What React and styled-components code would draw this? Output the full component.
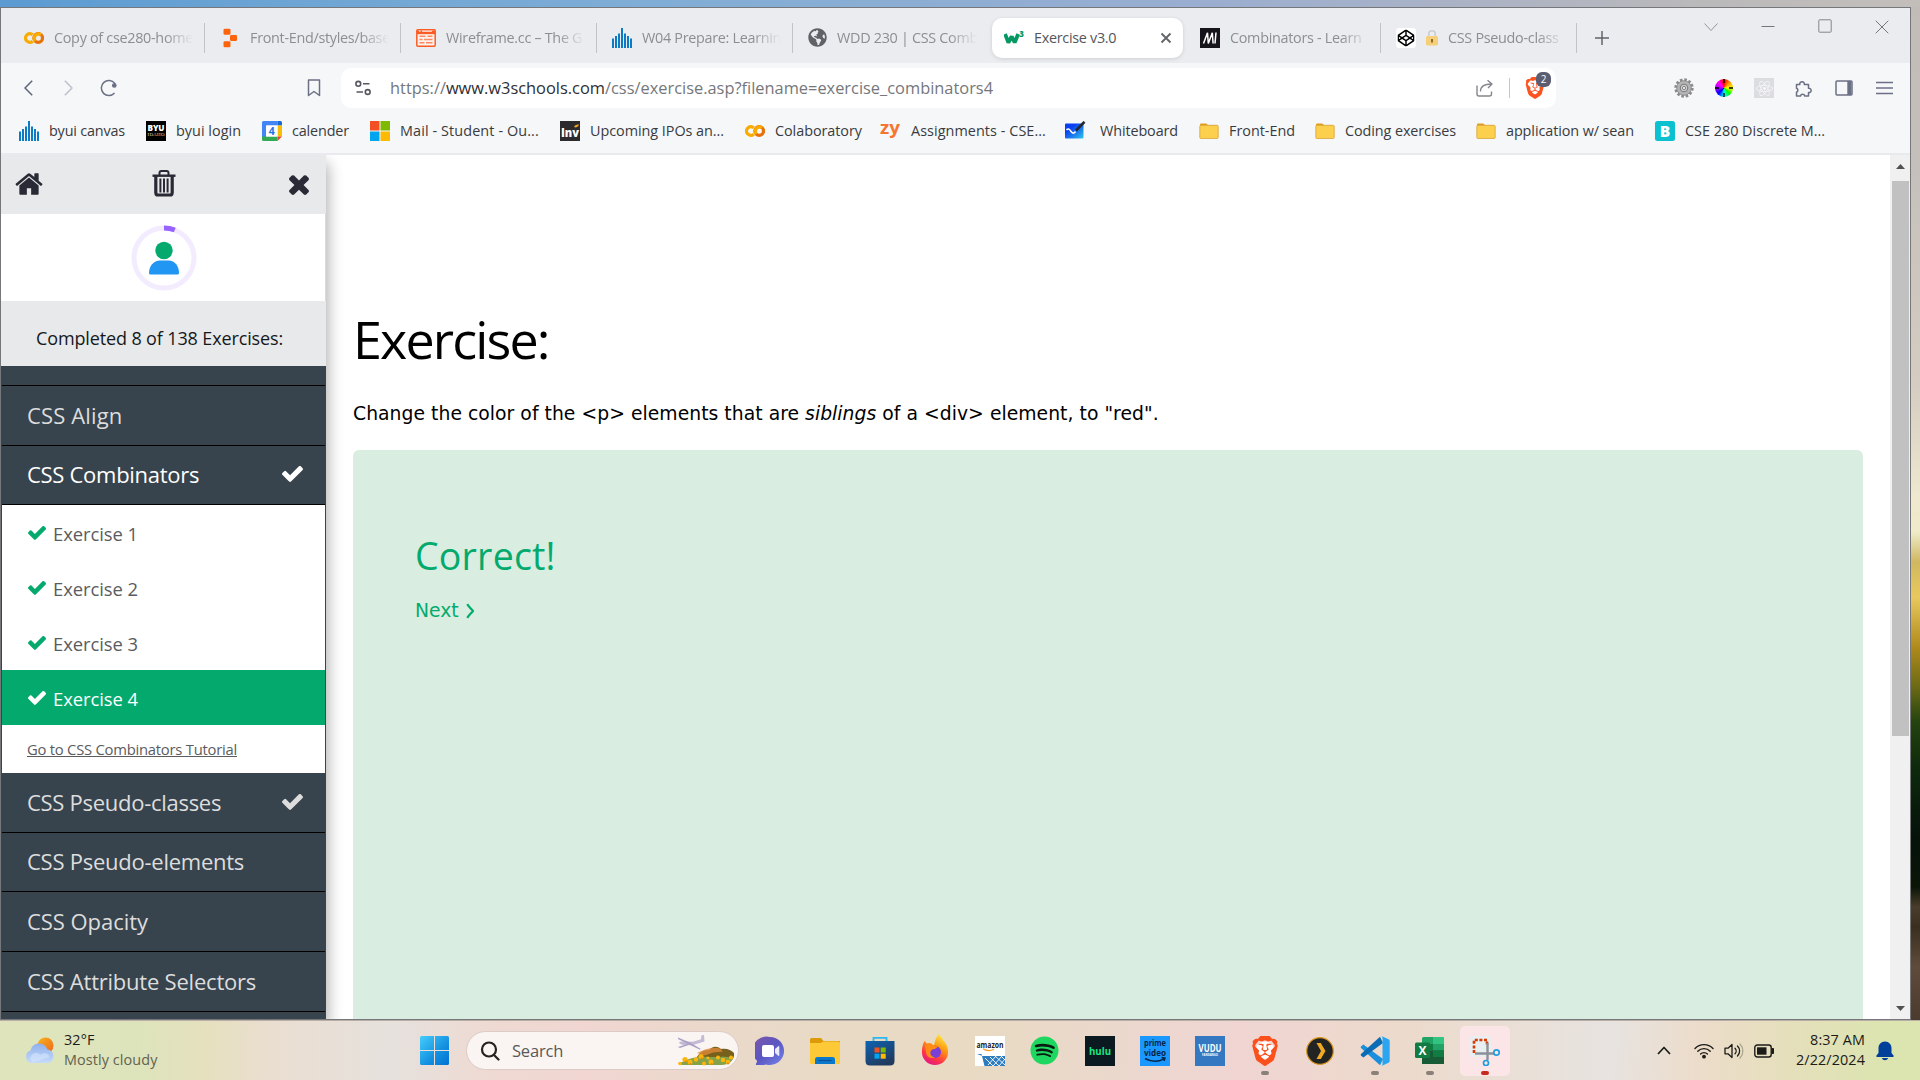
import React from 'react';
import styled, { createGlobalStyle, css } from 'styled-components';
import { SiBrave } from 'react-icons/si';
import { FaSpotify, FaGlobeAmericas, FaReact, FaCodepen } from 'react-icons/fa';

const ui = '"Open Sans", "Noto Sans", sans-serif';
const verdana = '"DejaVu Sans", Verdana, sans-serif';

const GlobalStyle = createGlobalStyle`
  * { box-sizing: border-box; }
  body { margin: 0; overflow: hidden; font-family: ${ui}; }
  svg { display: block; flex: none; }
`;

/* ---------- shell ---------- */

const Desktop = styled.div`
  width: 1920px;
  height: 1080px;
  display: grid;
  grid-template-columns: 1911px 9px;
  grid-template-rows: 7px 1013px 60px;
  overflow: hidden;
`;

const SkyStrip = styled.div`
  grid-column: 1 / 3;
  background: linear-gradient(90deg, #5b9bd2 0, #6ea5d4 300px, #7fadd6 640px, #9aaed0 1200px, #aab2c6 1450px, #bab9ba 1700px, #c3beba 1920px);
`;

const Window = styled.main`
  display: flex;
  flex-direction: column;
  border: 1px solid #75777b;
  background: #fff;
  overflow: hidden;
`;

const Meadow = styled.div`
  background: linear-gradient(180deg, #c2bcb8 0, #c4bfbb 150px, #d5cdc1 380px, #efe8cf 490px, #efebc9 525px, #d0b860 555px, #e8c95e 590px, #b08a1c 640px, #6b6a14 680px, #24430f 715px, #0e2a0c 760px, #05120a 830px, #0a1507 880px, #4b3d2c 900px, #3a2f1f 920px, #5f4b3b 960px, #4b3a2e 1013px);
`;

/* ---------- tabs ---------- */

const TabStrip = styled.div`
  height: 55px;
  flex: none;
  display: flex;
  align-items: center;
  background: #ebecf0;
  padding: 4px 0 0 8px;
`;

const TabSlot = styled.div`
  width: 196px;
  height: ${(p) => (p.$active ? 40 : 30)}px;
  display: flex;
  align-items: center;
  padding: 0 9px 0 15px;
  gap: 10px;
  border-right: 1px solid ${(p) => (p.$plain ? 'transparent' : '#c2c3c8')};
  ${(p) =>
    p.$active &&
    css`
      width: 191px;
      margin: 0 2px 0 3px;
      padding: 0 10px 0 12px;
      border: 0;
      border-radius: 10px;
      background: #fff;
      box-shadow: 0 1px 4px rgba(0, 0, 0, 0.12);
    `}
`;

const TabTitle = styled.span`
  flex: 1;
  min-width: 0;
  overflow: hidden;
  white-space: nowrap;
  font-size: 14.4px;
  line-height: 24px;
  letter-spacing: -0.3px;
  color: ${(p) => (p.$active ? '#55565a' : '#8d8e92')};
  ${(p) =>
    !p.$active &&
    css`
      mask-image: linear-gradient(90deg, #000 calc(100% - 30px), transparent calc(100% - 2px));
    `}
`;

const NewTab = styled.div`
  width: 50px;
  display: flex;
  justify-content: center;
`;

const WindowButtons = styled.div`
  margin-left: auto;
  height: 38px;
  padding-bottom: 22px;
  display: flex;
  align-items: center;
`;

const WindowButton = styled.div`
  width: 57px;
  display: flex;
  justify-content: center;
`;

/* ---------- toolbar ---------- */

const Toolbar = styled.div`
  height: 50px;
  flex: none;
  display: flex;
  align-items: center;
  background: #f5f7f9;
`;

const ToolButton = styled.div`
  width: 40px;
  display: flex;
  justify-content: center;
`;

const NavGroup = styled.div`
  width: 340px;
  display: flex;
  align-items: center;
  padding: 0 7px 0 7px;
  & > :last-child { margin-left: auto; }
`;

const AddressBar = styled.div`
  width: 1215px;
  height: 40px;
  display: flex;
  align-items: center;
  padding: 0 10px 0 14px;
  border-radius: 10px;
  background: #fff;
`;

const Url = styled.span`
  flex: 1;
  margin: -2px 0 0 19px;
  white-space: nowrap;
  font-size: 16.4px;
  color: #75777c;
  b { font-weight: 400; color: #2e2f33; }
`;

const Rule = styled.div`
  width: 1px;
  height: 20px;
  margin: 0 14px 0 15px;
  background: #c4c6ca;
`;

const Shield = styled.div`
  position: relative;
  color: #fb5420;
`;

const ShieldCount = styled.div`
  position: absolute;
  top: -5px;
  left: 12px;
  width: 15px;
  height: 15px;
  border-radius: 6px;
  background: #5b5e70;
  color: #fff;
  font-size: 10px;
  line-height: 15px;
  text-align: center;
`;

const Extensions = styled.div`
  margin-left: auto;
  display: flex;
  align-items: center;
  padding-right: 6px;
`;

const ColorWheel = styled.div`
  width: 18px;
  height: 18px;
  border-radius: 50%;
  background: conic-gradient(#f00, #ff9500, #ff0, #0f0, #0ff, #00f, #a0f, #f0f, #f00);
`;

const ReactBadge = styled.div`
  width: 20px;
  height: 20px;
  display: flex;
  align-items: center;
  justify-content: center;
  background: #dcdde0;
  color: #f7f7f8;
`;

/* ---------- bookmarks ---------- */

const Bookmarks = styled.div`
  height: 40px;
  flex: none;
  display: flex;
  align-items: flex-start;
  padding: 6px 0 0 18px;
  background: #f5f7f9;
`;

const Bookmark = styled.div`
  width: ${(p) => p.$w}px;
  height: 24px;
  flex: none;
  display: flex;
  align-items: center;
  gap: ${(p) => p.$gap || 10}px;
`;

const BookmarkLabel = styled.span`
  white-space: nowrap;
  font-size: 14.4px;
  line-height: 24px;
  letter-spacing: ${(p) => p.$ls || 0}px;
  color: #3a3b40;
`;

/* ---------- page ---------- */

const Page = styled.div`
  flex: 1;
  min-height: 0;
  display: flex;
  border-top: 2px solid #e9eaed;
  background: #fff;
`;

const Sidebar = styled.aside`
  width: 325px;
  flex: none;
  z-index: 1;
  display: flex;
  flex-direction: column;
  background: #38444d;
  box-shadow: 2px 8px 14px rgba(0, 0, 0, 0.32);
  clip-path: inset(0 -30px 0 0);
`;

const SideTop = styled.div`
  height: 59px;
  flex: none;
  display: flex;
  justify-content: space-between;
  padding: 14px 12px 0 13px;
  background: #e7e9eb;
`;

const Profile = styled.div`
  height: 87px;
  flex: none;
  display: flex;
  justify-content: center;
  align-items: center;
  padding-left: 1px;
  border-right: 1px solid #d9dadb;
  background: #fff;
`;

const Progress = styled.div`
  height: 65px;
  flex: none;
  padding: 24px 0 0 35px;
  font-size: 18px;
  line-height: 26px;
  letter-spacing: -0.13px;
  white-space: nowrap;
  color: #16181b;
  background: #e7e9eb;
`;

const Menu = styled.nav`
  flex: 1;
  min-height: 0;
  display: flex;
  flex-direction: column;
  padding: 0 1px;
  overflow: hidden;
  background: #38444d;
`;

const MenuItem = styled.div`
  height: ${(p) => p.$h}px;
  flex: none;
  display: flex;
  align-items: center;
  justify-content: space-between;
  padding: 0 22px 2px 25px;
  border-bottom: 1px solid #000;
  font-size: 22px;
  letter-spacing: ${(p) => p.$ls || 0}px;
  white-space: nowrap;
  color: ${(p) => (p.$open ? '#fff' : '#ddd')};
`;

const Exercise = styled.div`
  height: 55px;
  flex: none;
  display: flex;
  align-items: center;
  gap: 7px;
  padding: 1px 0 0 26px;
  font-size: 18.4px;
  letter-spacing: -0.05px;
  color: ${(p) => (p.$current ? '#fff' : '#5a5c5e')};
  background: ${(p) => (p.$current ? '#04aa6d' : '#fff')};
  svg { color: ${(p) => (p.$current ? '#fff' : '#04aa6d')}; }
`;

const TutorialRow = styled.div`
  height: 48px;
  flex: none;
  padding: 12px 0 0 25px;
  font-size: 14.8px;
  line-height: 24px;
  letter-spacing: -0.24px;
  white-space: nowrap;
  text-decoration: underline;
  color: #5a5c5e;
  background: #fff;
`;

const Content = styled.section`
  flex: 1;
  min-width: 0;
  display: flex;
  flex-direction: column;
  padding: 148px 27px 0 27px;
  overflow: hidden;
  color: #000;
`;

const Heading = styled.h1`
  margin: 0;
  height: 72px;
  font-size: 52px;
  line-height: 72px;
  font-weight: 400;
  letter-spacing: -1.85px;
`;

const Prompt = styled.p`
  margin: 25px 0 0;
  height: 50px;
  font-family: ${verdana};
  font-size: 18.75px;
  line-height: 28px;
  letter-spacing: 0.045px;
  white-space: nowrap;
`;

const Result = styled.div`
  flex: 1;
  padding: 78px 62px 0;
  border-radius: 6px 6px 0 0;
  color: #04aa6d;
  background: #d9eee1;
`;

const ResultTitle = styled.div`
  font-size: 37.5px;
  line-height: 56px;
  letter-spacing: 0.2px;
`;

const NextLink = styled.div`
  display: flex;
  align-items: center;
  gap: 7px;
  margin-top: 13px;
  font-family: ${verdana};
  font-size: 18.75px;
  line-height: 28px;
`;

const Scrollbar = styled.div`
  width: 20px;
  flex: none;
  display: flex;
  flex-direction: column;
  align-items: center;
  padding: 9px 0 8px;
  background: #f0f0f0;
`;

const Thumb = styled.div`
  width: 17px;
  height: 555px;
  margin: 12px 0 auto;
  background: #c1c1c1;
`;

/* ---------- taskbar ---------- */

const Taskbar = styled.footer`
  grid-column: 1 / 3;
  display: flex;
  align-items: center;
  border-top: 1px solid #b9aea6;
  background: linear-gradient(92deg, #dfe4bd 0, #dde4bb 140px, #e6e0bf 210px, #eaded0 270px, #e6e1dd 390px, #eedad2 490px, #f1d6d2 580px, #ead9ca 720px, #e8dac4 860px, #e8dac3 980px, #ebd8cd 1120px, #f0d5d3 1240px, #ecdacb 1400px, #e9e0d8 1530px, #e7e3e0 1610px, #ecdcca 1700px, #e6dfbd 1780px, #dce4b0 1880px);
`;

const Weather = styled.div`
  width: 415px;
  display: flex;
  align-items: center;
  gap: 9px;
  padding-left: 24px;
`;

const Stack = styled.div`
  display: flex;
  flex-direction: column;
  align-items: ${(p) => (p.$right ? 'flex-end' : 'flex-start')};
  margin-top: -2px;
  font-size: 14.4px;
  line-height: 20px;
  letter-spacing: 0.1px;
  white-space: nowrap;
  color: #1c1c18;
`;

const Dim = styled.span`
  color: #62624f;
`;

const StartButton = styled.div`
  width: 38px;
  display: flex;
  justify-content: center;
`;

const SearchBox = styled.div`
  width: 273px;
  height: 39px;
  display: flex;
  align-items: center;
  gap: 12px;
  margin: 0 3px 0 13px;
  padding: 0 3px 0 13px;
  border: 1px solid #dccbc6;
  border-radius: 20px;
  font-size: 16.5px;
  letter-spacing: -0.2px;
  color: #5b5957;
  background: #faf5f2;
  & > :last-child { margin-left: auto; }
`;

const AppButton = styled.div`
  position: relative;
  width: 55px;
  height: 50px;
  display: flex;
  align-items: center;
  justify-content: center;
`;

const AppTile = styled.div`
  width: 50px;
  height: 50px;
  display: flex;
  align-items: center;
  justify-content: center;
  border-radius: 5px;
  background: ${(p) => (p.$on ? '#fbe5e7' : 'transparent')};
`;

const Backed = styled.div`
  color: ${(p) => p.$fg};
  background: radial-gradient(${(p) => p.$back} ${(p) => p.$r}px, transparent ${(p) => p.$r + 1}px);
`;

const Running = styled.div`
  position: absolute;
  bottom: 1px;
  left: 24px;
  width: 8px;
  height: 4px;
  border-radius: 2px;
  background: ${(p) => (p.$alert ? '#c42b1c' : '#8b8078')};
`;

const Tray = styled.div`
  margin-left: auto;
  display: flex;
  align-items: center;
  padding-right: 26px;
`;

const TrayIcon = styled.div`
  margin-right: ${(p) => p.$after}px;
`;

/* ---------- icons ---------- */

const CHECK = 'M1671 566q0 40-28 68l-724 724-136 136q-28 28-68 28t-68-28l-136-136-362-362q-28-28-28-68t28-68l136-136q28-28 68-28t68 28l294 295 656-657q28-28 68-28t68 28l136 136q28 28 28 68z';
const TIMES = 'M1490 1322q0 40-28 68l-136 136q-28 28-68 28t-68-28l-294-294-294 294q-28 28-68 28t-68-28l-136-136q-28-28-28-68t28-68l294-294-294-294q-28-28-28-68t28-68l136-136q28-28 68-28t68 28l294 294 294-294q28-28 68-28t68 28l136 136q28 28 28 68t-28 68l-294 294 294 294q28 28 28 68z';
const HOME = 'M1472 992v480q0 26-19 45t-45 19h-384v-384h-256v384h-384q-26 0-45-19t-19-45v-480q0-1 .5-3t.5-3l575-474 575 474q1 2 1 6zm223-69l-62 74q-8 9-21 11h-3q-13 0-21-7l-692-577-692 577q-12 8-24 7-13-2-21-11l-62-74q-8-10-7-23.5t11-21.5l719-599q32-26 76-26t76 26l244 204v-195q0-14 9-23t23-9h192q14 0 23 9t9 23v408l219 182q10 8 11 21.5t-7 23.5z';

const Check = ({ w, h }) => (
  <svg width={w} height={h} viewBox="121 339 1550 1188" preserveAspectRatio="none">
    <path d={CHECK} fill="currentColor" />
  </svg>
);
const HomeIcon = () => (
  <svg width="30" height="30" viewBox="0 0 1792 1792"><path d={HOME} fill="#282a35" /></svg>
);
const CloseIcon = () => (
  <svg width="30" height="30" viewBox="0 0 1792 1792"><path d={TIMES} fill="#282a35" /></svg>
);
const TrashIcon = () => (
  <svg width="24" height="28" viewBox="0 0 24 28" fill="none" stroke="#282a35">
    <path d="M.5 6.700h23" strokeWidth="2.400" />
    <path d="M7.500 6V4c0-1.100.8-1.900 1.900-1.900h5.200c1.100 0 1.900.8 1.900 1.900v2" strokeWidth="2" />
    <path d="M3.800 7v16.400c0 1.700.8 2.600 2.200 2.600h12c1.400 0 2.200-.9 2.200-2.600V7" strokeWidth="3.200" />
    <path d="M8.400 9.500v14M12 9.500v14M15.600 9.500v14" strokeWidth="2" />
  </svg>
);
const Avatar = () => (
  <svg width="66" height="66" viewBox="0 0 66 66">
    <circle cx="33" cy="33" r="30" fill="none" stroke="#f3ecff" strokeWidth="5" />
    <path d="M33 3a30 30 0 0 1 10.800 2" fill="none" stroke="#9763ff" strokeWidth="5" />
    <circle cx="33" cy="25.500" r="8.700" fill="#04aa6d" />
    <path d="M18 48c0-7 4.500-12.600 11-12.600h8.500C44 35.400 48 41 48 48q0 1.500-1.500 1.500h-27Q18 49.500 18 48z" fill="#2196f3" />
  </svg>
);

const Colab = () => (
  <svg width="20" height="20" viewBox="0 0 20 20" fill="none" strokeWidth="3.200">
    <circle cx="14.200" cy="10" r="4.300" stroke="#e8710a" />
    <path d="M8.700 13.200A4.300 4.300 0 1 1 8.700 6.800" stroke="#f9ab00" />
    <path d="M11.200 13a4.300 4.300 0 0 1 5.800-6.200" stroke="#f9ab00" />
  </svg>
);
const Replit = () => (
  <svg width="20" height="20" viewBox="0 0 20 20" fill="#fb640c">
    <rect x="3.500" y=".800" width="7" height="6" rx="1.300" />
    <rect x="10" y="7" width="7" height="6" rx="1.300" />
    <rect x="3.500" y="13.200" width="7" height="6" rx="1.300" />
  </svg>
);
const Wireframe = () => (
  <svg width="20" height="20" viewBox="0 0 20 20">
    <rect x=".8" y="1.800" width="18.400" height="16.400" rx="1" fill="#fff2ec" stroke="#fa5b25" strokeWidth="1.500" />
    <path d="M1 4.400h18" stroke="#fa5b25" strokeWidth="3.500" />
    <path d="M3 3.200h1.500M6 3.200h10" stroke="#fff" />
    <path d="M3.500 8.300h6M11.500 8.300h5M3.500 11.500h3M8 11.500h8.500M3.500 14.700h5M10 14.700h6.500" stroke="#fb8a63" strokeWidth="1.600" />
  </svg>
);
const Spires = () => (
  <svg width="20" height="20" viewBox="0 0 20 20" stroke="#0d7ac4" strokeWidth="2">
    <path d="M1 20v-9.500M4 20V8M7 20V5.500M10 20V0M13 20V5.500M16 20V8M19 20v-9.500" />
  </svg>
);
const W3 = () => (
  <svg width="20" height="20" viewBox="0 0 20 20">
    <path d="M1 6l3.400 8.500L7.700 8.500l3 6L14.200 6" fill="none" stroke="#059862" strokeWidth="3.800" strokeLinejoin="bevel" />
    <text x="15.200" y="8.500" fontSize="7.800" fontWeight="800" fontFamily="Open Sans" fill="#059862">3</text>
  </svg>
);
const Mdn = () => (
  <svg width="20" height="20" viewBox="0 0 20 20">
    <rect width="20" height="20" fill="#15141a" />
    <path d="M3.500 15.500L7.500 4.800l.8 10.700L12.300 4.800l.8 10.700M16 4.500l-1 11" fill="none" stroke="#fff" strokeWidth="1.500" />
  </svg>
);
const Codepen = () => (
  <svg width="20" height="20" viewBox="0 0 20 20">
    <rect width="20" height="20" rx="3" fill="#fff" />
    <g transform="translate(1.500 1.500)"><FaCodepen size={17} color="#000" /></g>
  </svg>
);
const Lock = () => (
  <svg width="12" height="16" viewBox="0 0 12 16">
    <path d="M2.800 7V4a3.200 3.200 0 0 1 6.400 0v3" fill="none" stroke="#c9ced3" strokeWidth="1.600" />
    <rect y="6" width="12" height="9.500" rx="1.500" fill="#f6cf78" />
    <path d="M6 9v3.500" stroke="#8a6a30" strokeWidth="2" />
  </svg>
);
const Byu = () => (
  <svg width="20" height="20" viewBox="0 0 20 20">
    <rect width="20" height="20" fill="#000" />
    <text x="10" y="9.500" fontSize="8.200" fontWeight="800" textAnchor="middle" fontFamily="Open Sans" fill="#fff" textLength="17">BYU</text>
    <text x="10" y="15.300" fontSize="5" textAnchor="middle" fontFamily="Liberation Serif" fill="#ddd" textLength="17">IDAHO</text>
  </svg>
);
const Calendar = () => (
  <svg width="20" height="20" viewBox="0 0 20 20">
    <path d="M1.500 0h14v4.500H4.500V16H0V1.500Q0 0 1.500 0z" fill="#4285f4" />
    <path d="M15.500 0h3Q20 0 20 1.500V4.500h-4.500z" fill="#1967d2" />
    <path d="M15.500 4.500H20v11h-4.500z" fill="#fbbc04" />
    <path d="M0 15.500h15.500V20h-14Q0 20 0 18.500z" fill="#34a853" />
    <path d="M15.500 15.500H20L15.500 20z" fill="#ea4335" />
    <rect x="4" y="4.500" width="11.500" height="11" fill="#fff" />
    <text x="9.800" y="13.700" fontSize="10.500" fontWeight="700" textAnchor="middle" fontFamily="Open Sans" fill="#1a73e8">4</text>
  </svg>
);
const Microsoft = () => (
  <svg width="20" height="20" viewBox="0 0 20 20">
    <path d="M0 0h9.500v9.500H0z" fill="#f25022" /><path d="M10.500 0H20v9.500h-9.500z" fill="#7fba00" />
    <path d="M0 10.500h9.500V20H0z" fill="#00a4ef" /><path d="M10.500 10.500H20V20h-9.500z" fill="#ffb900" />
  </svg>
);
const Inv = () => (
  <svg width="20" height="20" viewBox="0 0 20 20">
    <rect width="20" height="20" fill="#2b2b2d" />
    <text x="10" y="15.500" fontSize="11.500" fontWeight="800" textAnchor="middle" fontFamily="Open Sans" fill="#fff" textLength="18" lengthAdjust="spacingAndGlyphs">Inv</text>
    <path d="M14 5.500q2-2.500 5-2-1 3-4 3z" fill="#f6a21b" />
  </svg>
);
const Zy = () => (
  <svg width="20" height="20" viewBox="0 0 20 20">
    <text x="10" y="12.500" fontSize="18" fontWeight="700" textAnchor="middle" fontFamily="Open Sans" fill="#f5762f" textLength="20" lengthAdjust="spacingAndGlyphs">zy</text>
  </svg>
);
const Whiteboard = () => (
  <svg width="22" height="20" viewBox="0 0 22 20">
    <defs><linearGradient id="wb" x1="0" y1="0" x2="1" y2="1"><stop offset=".3" stopColor="#0a3ff0" /><stop offset="1" stopColor="#2fc6ea" /></linearGradient></defs>
    <rect y="2.500" width="18.500" height="15" rx="1" fill="url(#wb)" />
    <path d="M1.500 9c2-2.500 3.500 0 5 2s3 1 4-.5" fill="none" stroke="#fff" strokeWidth="1.500" />
    <path d="M11 9.500L19.500.8" stroke="#23282f" strokeWidth="2.600" />
  </svg>
);
const Folder = () => (
  <svg width="20" height="20" viewBox="0 0 20 20">
    <path d="M1 3.600q0-1.200 1.200-1.200h5L9.500 4.400H18V8H1z" fill="#dd9d1c" />
    <rect x=".8" y="4.300" width="18.400" height="13.200" rx="1" fill="#fccf4d" stroke="#d9a53a" strokeWidth=".8" />
  </svg>
);
const BIcon = () => (
  <svg width="20" height="20" viewBox="0 0 20 20">
    <rect width="20" height="20" rx="2.500" fill="#0cc1cf" />
    <text x="10" y="15.600" fontSize="15.500" fontWeight="800" textAnchor="middle" fontFamily="Open Sans" fill="#fff">B</text>
  </svg>
);

const Line = ({ w = 20, h = 20, d, c = '#6b7084', sw = 1.5, children, cap = 'butt' }) => (
  <svg width={w} height={h} viewBox={`0 0 ${w} ${h}`} fill="none" stroke={c} strokeWidth={sw} strokeLinecap={cap} strokeLinejoin="round">
    {d && <path d={d} />}
    {children}
  </svg>
);

const Gear = () => (
  <svg width="20" height="20" viewBox="0 0 20 20">
    <circle cx="10" cy="10" r="8.300" fill="none" stroke="#8b8b8b" strokeWidth="2.800" strokeDasharray="2.600 1.745" />
    <circle cx="10" cy="10" r="7.300" fill="#b4b4b4" stroke="#808080" strokeWidth=".8" />
    <circle cx="10" cy="10" r="3.800" fill="#d2d2d2" stroke="#777" />
    <circle cx="10" cy="10" r="1.600" fill="#f5f5f5" stroke="#666" strokeWidth=".8" />
  </svg>
);
const Wheel = () => (
  <svg width="18" height="18" viewBox="0 0 18 18" stroke="#000" strokeWidth="1.400"><path d="M9 0v4M9 14v4M0 9h4M14 9h4" /></svg>
);

const WeatherIcon = () => (
  <svg width="31" height="27" viewBox="0 0 31 27">
    <defs>
      <linearGradient id="cl" x1="0" y1="0" x2="0" y2="1"><stop offset="0" stopColor="#8fb0ec" /><stop offset="1" stopColor="#c5dbfa" /></linearGradient>
      <linearGradient id="sn" x1="0" y1="0" x2="1" y2="1"><stop offset="0" stopColor="#f7b51f" /><stop offset="1" stopColor="#f0641b" /></linearGradient>
    </defs>
    <circle cx="21.500" cy="8.500" r="8" fill="url(#sn)" />
    <path d="M7 26a6.500 6.500 0 0 1-.5-12.500C7.500 9 11 6.500 15 6.500s7 2.300 8.200 5.700A7 7 0 0 1 24 26z" fill="url(#cl)" />
    <path d="M9 25.500a5 5 0 0 1 .5-9c3-2 6 0 7 1.500 3-3 8-2 9 2" fill="#d6e6fc" opacity=".6" />
  </svg>
);
const StartIcon = () => (
  <svg width="29" height="29" viewBox="0 0 29 29">
    <defs><linearGradient id="st" gradientUnits="userSpaceOnUse" x1="0" y1="0" x2="29" y2="29"><stop offset="0" stopColor="#45cdfb" /><stop offset=".6" stopColor="#1390e0" /><stop offset="1" stopColor="#0072d2" /></linearGradient></defs>
    <path d="M1.500 0H14v14H0V1.500Q0 0 1.500 0zM15 0h12.500Q29 0 29 1.500V14H15zM0 15h14v14H1.500Q0 29 0 27.500zM15 15h14v12.500q0 1.500-1.500 1.500H15z" fill="url(#st)" />
  </svg>
);
const SearchArt = () => (
  <svg width="58" height="32" viewBox="0 0 58 32">
    <path d="M18 26c3-8 8-11 14-11 4-4 8-4 12-1 6-1 10 1 13 4q1 5-4 9z" fill="#76601c" />
    <path d="M20 18c7-4 16-6 23-4.500l3 3-10 1-8 3z" fill="#e0883a" opacity=".8" />
    <path d="M2 29c8-6 20-8 30-7 9 0 17-1 24 1-1 4-6 7-11 7H8q-5 0-6-1z" fill="#84a24a" />
    <g fill="#fdb40c">
      <circle cx="3" cy="28.500" r="1.800" /><circle cx="8" cy="24.500" r="2.600" /><circle cx="13" cy="27" r="2.500" /><circle cx="19" cy="24.500" r="2.200" />
      <circle cx="24" cy="21.500" r="2.600" /><circle cx="27" cy="28.500" r="2" /><circle cx="34" cy="27" r="2.500" /><circle cx="41" cy="22.500" r="2" />
      <circle cx="46" cy="25" r="2.200" /><circle cx="51" cy="27" r="2.300" /><circle cx="54" cy="22.500" r="2" /><circle cx="31" cy="23" r="1.600" />
    </g>
    <g fill="#e8860a">
      <circle cx="8.500" cy="26.500" r="1" /><circle cx="13.500" cy="29" r="1" /><circle cx="24.500" cy="23.500" r="1.100" /><circle cx="34.500" cy="29" r="1" /><circle cx="51" cy="28.500" r="1" />
    </g>
    <path d="M2 7.500q1-1.500 4-1l10 .3 8-2.500.5-4 2.500-.3.500 6.500L15 10.200l-8-.2q-4-.5-5-2.500z" fill="#c3bbd6" />
    <path d="M1 2.500l12 5 11 6.500-1.500.5L12 9.500 1 4zM1 12l9-3 3 .5-10 3.500z" fill="#aaa1c4" />
  </svg>
);
const ChatIcon = () => (
  <svg width="30" height="30" viewBox="0 0 30 30">
    <defs><linearGradient id="ch" x1="0" y1="0" x2="1" y2="1"><stop offset="0" stopColor="#7d58a8" /><stop offset=".5" stopColor="#5b55c2" /><stop offset="1" stopColor="#7486e8" /></linearGradient></defs>
    <path d="M15 1a14 14 0 1 1-4 27.400q-1 .4-2 .6H1.200q-.8-.5 0-1.500l1-2.500A14 14 0 0 1 15 1z" fill="url(#ch)" />
    <rect x="7" y="9" width="12" height="12" rx="2" fill="#fff" />
    <path d="M20 13l3.500-3q.8 0 .8.800v8.400q0 .8-.8.800L20 17z" fill="#eceaff" />
  </svg>
);
const Explorer = () => (
  <svg width="30" height="28" viewBox="0 0 30 28">
    <path d="M0 2.500Q0 1 1.500 1H11l2.500 3H30v6H0z" fill="#dc9a09" />
    <path d="M0 6h11l2-1.500h15.500Q30 4.500 30 6v19.500q0 1.500-1.500 1.500h-27Q0 27 0 25.500z" fill="#fdc937" />
    <path d="M5 27v-4.500Q5 20 7.500 20h15q2.500 0 2.500 2.500V27z" fill="#0b79cb" />
    <path d="M8.500 23.500h13" stroke="#0a4f94" strokeWidth="1.200" />
  </svg>
);
const Store = () => (
  <svg width="30" height="30" viewBox="0 0 30 30">
    <defs><linearGradient id="so" x1="0" y1="0" x2=".6" y2="1"><stop offset="0" stopColor="#0e63b3" /><stop offset="1" stopColor="#213a5e" /></linearGradient></defs>
    <path d="M8.500 6V1.800h13V6" fill="none" stroke="#29b8ef" strokeWidth="1.800" />
    <path d="M.5 5h29v20q0 4.500-4.500 4.500H5Q.5 29.500.5 25z" fill="url(#so)" />
    <path d="M9.500 11.500h5v5h-5z" fill="#f25022" /><path d="M15.700 11.500h5v5h-5z" fill="#7fba00" />
    <path d="M9.500 17.700h5v5h-5z" fill="#00a4ef" /><path d="M15.700 17.700h5v5h-5z" fill="#ffb900" />
  </svg>
);
const Firefox = () => (
  <svg width="28" height="34" viewBox="0 0 30 36">
    <defs><linearGradient id="ff" x1=".8" y1="0" x2=".3" y2="1"><stop offset="0" stopColor="#fff04a" /><stop offset=".4" stopColor="#ff980e" /><stop offset=".75" stopColor="#ff3647" /><stop offset="1" stopColor="#e31587" /></linearGradient></defs>
    <path d="M19 0c3 3 4 5 5 7 3 2 5 7 5 12a14 14 0 0 1-28 0c0-5 1-9 3-12l2 3q3-1 5 0l3 2c1-5 2-9 5-12z" fill="url(#ff)" />
    <circle cx="15" cy="19" r="6.500" fill="#7a3fd6" />
    <path d="M4 12q4-3 9 0 3 1 5 1-1 3-5 3-3 1-3 4 0 4 5 5-6 2-9-3z" fill="#ff8a16" />
  </svg>
);
const Amazon = () => (
  <svg width="30" height="30" viewBox="0 0 30 30">
    <rect width="30" height="30" fill="#fff" />
    <text x="15" y="11.500" fontSize="8.400" fontWeight="700" textAnchor="middle" fontFamily="Open Sans" fill="#222" textLength="27" lengthAdjust="spacingAndGlyphs">amazon</text>
    <path d="M8 12.800q5 3.500 11 .5" fill="none" stroke="#f79a1c" strokeWidth="1.200" />
    <path d="M2 18h4.500l3 12H30V20H7.500z" fill="#2e7cc0" />
    <path d="M10 22l8 8M15 21l9 9M20 20l10 9M26 20l4 4M13 29l8-9M18 30l9-10M24 30l6-7" stroke="#fff" strokeWidth=".9" />
  </svg>
);
const TextTile = ({ bg, fg, lines, smile }) => (
  <svg width="30" height="30" viewBox="0 0 30 30">
    <rect width="30" height="30" fill={bg} />
    {lines.map(([t, y, s, l]) => (
      <text key={t} x="15" y={y} fontSize={s} fontWeight="700" textAnchor="middle" fontFamily="Open Sans" fill={fg} textLength={l} lengthAdjust="spacingAndGlyphs">{t}</text>
    ))}
    {smile && <path d="M5 22.500q10 5.500 19 .3M21.500 21.500l3.500.5-1 3" fill="none" stroke={fg} strokeWidth="1.500" />}
  </svg>
);
const Plex = () => (
  <svg width="28" height="28" viewBox="0 0 28 28">
    <circle cx="14" cy="14" r="13.300" fill="#222323" stroke="#d9951a" strokeWidth="1.200" />
    <path d="M10.500 6h4.300l4.700 8-4.700 8h-4.300l4.500-8z" fill="#efa924" />
  </svg>
);
const VsCode = () => (
  <svg width="30" height="30" viewBox="0 0 30 30">
    <path d="M3.300 8.600L1 10.400q-.7.700 0 1.500L20 29.200l3-6.200z" fill="#1a8fdd" />
    <path d="M3.300 21.400L1 19.600q-.7-.7 0-1.500L20 .8 23 7z" fill="#0b6cb5" />
    <path d="M21.500 0l7 3.200q1.200.6 1.200 1.800v20q0 1.200-1.200 1.800l-7 3.200q1-.8 1-2V2q0-1.200-1-2z" fill="#2aa5f2" />
  </svg>
);
const Excel = () => (
  <svg width="30" height="29" viewBox="0 0 30 29">
    <rect x="7" y="1" width="22" height="27" rx="1.500" fill="#21a366" />
    <path d="M18 1h9.500Q29 1 29 2.500V8H18z" fill="#33c481" />
    <path d="M7 8h11v6.500H7z" fill="#107c41" /><path d="M7 14.500h22v13q0 .5-1.500.5H7z" fill="#185c37" /><path d="M18 14.500h11V21H18z" fill="#107c41" />
    <rect y="6.500" width="15" height="15.500" rx="1.500" fill="#107c41" />
    <text x="7.500" y="18.500" fontSize="12" fontWeight="700" textAnchor="middle" fontFamily="Open Sans" fill="#fff">X</text>
  </svg>
);
const Snip = () => (
  <svg width="30" height="30" viewBox="0 0 30 30">
    <rect x="0" y="0" width="21" height="21" rx="2" fill="#e9eef1" />
    <path d="M4 17V4h13v6" fill="none" stroke="#d83b01" strokeWidth="2.600" strokeDasharray="3 1.600" />
    <path d="M17.500 7v17M5 17.500h19" stroke="#8b9199" strokeWidth="2.400" />
    <circle cx="26.500" cy="16.500" r="2.700" fill="none" stroke="#1f9de0" strokeWidth="1.700" />
    <circle cx="16" cy="27" r="2.500" fill="none" stroke="#1f9de0" strokeWidth="1.700" />
  </svg>
);
const Bell = () => (
  <svg width="18" height="20" viewBox="0 0 18 20" fill="#00409a">
    <path d="M9 .5c4 0 6.500 3 6.500 6.500v5l2.200 2.700q.3 1.300-1 1.300H1.300q-1.300 0-1-1.300L2.500 12V7C2.500 3.500 5 .5 9 .5zM5.800 17h6.400q-.8 2.300-3.200 2.300T5.800 17z" />
  </svg>
);
const Wifi = () => (
  <svg width="20" height="16" viewBox="0 0 20 16" fill="none" stroke="#1b1b18" strokeWidth="1.400" strokeLinecap="round">
    <path d="M1 5.500a12.500 12.500 0 0 1 18 0M3.800 8.300a8.600 8.600 0 0 1 12.400 0M6.600 11a4.800 4.800 0 0 1 6.800 0" />
    <circle cx="10" cy="13.700" r="1.200" fill="#1b1b18" />
  </svg>
);
const Sound = () => (
  <svg width="20" height="18" viewBox="0 0 20 18" fill="none" stroke="#1b1b18" strokeWidth="1.300" strokeLinejoin="round" strokeLinecap="round">
    <path d="M1 6.200h3L8 2.500v13L4 11.800H1z" />
    <path d="M11 6.200a4 4 0 0 1 0 5.600M13.500 4a7 7 0 0 1 0 10" /><path d="M16 2a10 10 0 0 1 0 14" stroke="#a9a88e" />
  </svg>
);
const Battery = () => (
  <svg width="21" height="14" viewBox="0 0 21 14">
    <rect x=".8" y="1" width="16.400" height="12" rx="2.500" fill="none" stroke="#1b1b18" strokeWidth="1.400" />
    <rect x="3" y="3.300" width="9.500" height="7.400" fill="#1b1b18" /><path d="M18 4.500h1.500V9.500H18z" fill="#1b1b18" stroke="#1b1b18" />
  </svg>
);

/* ---------- data ---------- */

const bookmarks = [
  [Spires, 'byui canvas', 127, -0.18],
  [Byu, 'byui login', 116, 0.02],
  [Calendar, 'calender', 108, -0.15],
  [Microsoft, 'Mail - Student - Ou...', 190, 0.11],
  [Inv, 'Upcoming IPOs an...', 185, -0.04],
  [Colab, 'Colaboratory', 135, -0.05],
  [Zy, 'Assignments - CSE...', 185, 0.06, 11],
  [Whiteboard, 'Whiteboard', 134, -0.11, 13],
  [Folder, 'Front-End', 116, -0.02],
  [Folder, 'Coding exercises', 161, -0.09],
  [Folder, 'application w/ sean', 179, -0.09],
  [BIcon, 'CSE 280 Discrete M...', 180, 0],
];

const apps = [
  [<ChatIcon />], [<Explorer />], [<Store />], [<Firefox />], [<Amazon />],
  [<Backed $fg="#1ed760" $back="#0b1a10" $r={12}><FaSpotify size={29} /></Backed>],
  [<TextTile bg="#0a1a20" fg="#1ce783" lines={[['hulu', 18.5, 10.5, 22]]} />],
  [<TextTile bg="#1a98ff" fg="#06264a" lines={[['prime', 10.2, 9, 22], ['video', 19.5, 9, 22]]} smile />],
  [<TextTile bg="#3478c1" fg="#fff" lines={[['VUDU', 16, 10, 23], ['FANDANGO', 20, 2.8, 16]]} />],
  [<Backed $fg="#fb4f1c" $back="#fff" $r={9}><SiBrave size={30} /></Backed>, 1],
  [<Plex />], [<VsCode />, 1], [<Excel />, 1], [<Snip />, 2],
];

export default function App() {
  return (
    <Desktop>
      <GlobalStyle />
      <SkyStrip />
      <Window>
        <TabStrip>
          <TabSlot><Colab /><TabTitle>Copy of cse280-home</TabTitle></TabSlot>
          <TabSlot><Replit /><TabTitle>Front-End/styles/base</TabTitle></TabSlot>
          <TabSlot><Wireframe /><TabTitle>Wireframe.cc – The G</TabTitle></TabSlot>
          <TabSlot><Spires /><TabTitle>W04 Prepare: Learnin</TabTitle></TabSlot>
          <TabSlot $plain><FaGlobeAmericas size={19} color="#5f6368" /><TabTitle>WDD 230 | CSS Comb</TabTitle></TabSlot>
          <TabSlot $active>
            <W3 /><TabTitle $active>Exercise v3.0</TabTitle>
            <Line w={14} h={14} d="M2.500 2.500l9 9M11.500 2.500l-9 9" c="#606368" sw={1.8} />
          </TabSlot>
          <TabSlot><Mdn /><TabTitle>Combinators - Learn</TabTitle></TabSlot>
          <TabSlot><Codepen /><Lock /><TabTitle>CSS Pseudo-class</TabTitle></TabSlot>
          <NewTab><Line w={16} h={16} d="M8 1v14M1 8h14" c="#606368" sw={1.5} /></NewTab>
          <WindowButtons>
            <WindowButton><Line w={14} h={10} d="M.5 1.500L7 8.500l6.500-7" c="#95969a" sw={1} /></WindowButton>
            <WindowButton><Line w={14} h={5} d="M.5 2.500h13" c="#75767a" sw={1} /></WindowButton>
            <WindowButton><Line w={14} h={15} d="M1.500.8h11q.7 0 .7.700v11q0 .700-.7.700h-11q-.7 0-.7-.700v-11q0-.7.700-.7z" c="#85868a" sw={1} /></WindowButton>
            <WindowButton><Line w={14} h={14} d="M.7.700l12.600 12.600M13.300.7L.700 13.300" c="#75767a" sw={1} /></WindowButton>
          </WindowButtons>
        </TabStrip>
        <Toolbar>
          <NavGroup>
            <ToolButton><Line w={9} h={16} d="M8.200.8L1 8l7.200 7.200" c="#5f6478" /></ToolButton>
            <ToolButton><Line w={9} h={16} d="M.8.8L8 8 .8 15.200" c="#bdc0ca" /></ToolButton>
            <ToolButton><Line w={18} h={18} c="#6b7084"><path d="M15.500 14a7.500 7.500 0 1 1 .3-9.500l.7 2.500" /><circle cx="15.300" cy="6.500" r="1.600" fill="#6b7084" /></Line></ToolButton>
            <ToolButton><Line w={14} h={18} d="M1.500 1h11v15.500L7 12.500l-5.500 4z" /></ToolButton>
          </NavGroup>
          <AddressBar>
            <Line w={16} h={16} c="#55585e" sw={1.6}>
              <circle cx="3.300" cy="3.800" r="2.400" /><circle cx="12.700" cy="12" r="2.400" /><path d="M8 3.800h6.500M1.500 12H8" />
            </Line>
            <Url>https://<b>www.w3schools.com</b>/css/exercise.asp?filename=exercise_combinators4</Url>
            <Line w={18} h={18} c="#85878d" sw={1.4}>
              <path d="M1 6.500v8.500q0 2 2 2h10.500q2 0 2-2v-2.500M4.500 12.500c0-5 3.500-7.500 11-7.500M11.500 1.200L16 5l-4 4" />
            </Line>
            <Rule />
            <Shield><SiBrave size={22} /><ShieldCount>2</ShieldCount></Shield>
          </AddressBar>
          <Extensions>
            <ToolButton><Gear /></ToolButton>
            <ToolButton><ColorWheel><Wheel /></ColorWheel></ToolButton>
            <ToolButton><ReactBadge><FaReact size={17} /></ReactBadge></ToolButton>
            <ToolButton><Line w={18} h={18} d="M1.500 5.500h3.300a2.300 2.300 0 1 1 4.500 0h4.200v3.800a2.200 2.200 0 1 1 0 4.300v3.400H9.800a2.200 2.200 0 0 0-4.300 0h-4v-3.700a2.200 2.200 0 0 0 0-4.100z" /></ToolButton>
            <ToolButton><Line w={18} h={16} c="#6b7084"><rect x="1" y="1" width="16" height="14" rx="1" /><path d="M14.300 1v14" strokeWidth="4" /></Line></ToolButton>
            <ToolButton><Line w={17} h={14} d="M0 1.500h17M0 7h17M0 12.500h17" sw={1.4} /></ToolButton>
          </Extensions>
        </Toolbar>
        <Bookmarks>
          {bookmarks.map(([Icon, label, w, ls, gap]) => (
            <Bookmark key={label} $w={w} $gap={gap}>
              <Icon /><BookmarkLabel $ls={ls}>{label}</BookmarkLabel>
            </Bookmark>
          ))}
        </Bookmarks>
        <Page>
          <Sidebar>
            <SideTop><HomeIcon /><TrashIcon /><CloseIcon /></SideTop>
            <Profile><Avatar /></Profile>
            <Progress>Completed 8 of 138 Exercises:</Progress>
            <Menu>
              <MenuItem $h={20} />
              <MenuItem $h={60} $ls={0.15}>CSS Align</MenuItem>
              <MenuItem $h={59} $ls={-0.29} $open>CSS Combinators<Check w={21} h={16} /></MenuItem>
              {[1, 2, 3, 4].map((n) => (
                <Exercise key={n} $current={n === 4}><Check w={18} h={14} /><span>Exercise {n}</span></Exercise>
              ))}
              <TutorialRow>Go to CSS Combinators Tutorial</TutorialRow>
              <MenuItem $h={60} $ls={-0.28}>CSS Pseudo-classes<Check w={21} h={16} /></MenuItem>
              <MenuItem $h={59} $ls={-0.25}>CSS Pseudo-elements</MenuItem>
              <MenuItem $h={60} $ls={-0.04}>CSS Opacity</MenuItem>
              <MenuItem $h={60} $ls={-0.22}>CSS Attribute Selectors</MenuItem>
            </Menu>
          </Sidebar>
          <Content>
            <Heading>Exercise:</Heading>
            <Prompt>Change the color of the &lt;p&gt; elements that are <i>siblings</i> of a &lt;div&gt; element, to "red".</Prompt>
            <Result>
              <ResultTitle>Correct!</ResultTitle>
              <NextLink>Next<Line w={9} h={16} d="M1.200 1.200c1.800 2.800 4.200 4.800 5.800 6.800C5.400 10 3 12 1.200 14.800" c="#04aa6d" sw={2.2} /></NextLink>
            </Result>
          </Content>
          <Scrollbar>
            <Line w={9} h={5} c="none"><path d="M0 5L4.500 0 9 5z" fill="#505050" /></Line>
            <Thumb />
            <Line w={9} h={5} c="none"><path d="M0 0h9L4.500 5z" fill="#505050" /></Line>
          </Scrollbar>
        </Page>
      </Window>
      <Meadow />
      <Taskbar>
        <Weather><WeatherIcon /><Stack><span>32°F</span><Dim>Mostly cloudy</Dim></Stack></Weather>
        <StartButton><StartIcon /></StartButton>
        <SearchBox>
          <Line w={20} h={20} c="#26221f" sw={2.2} cap="round"><circle cx="9" cy="8.500" r="7" /><path d="M14 14l4.500 4.500" /></Line>
          <span>Search</span><SearchArt />
        </SearchBox>
        {apps.map(([icon, run], i) => (
          <AppButton key={i}><AppTile $on={run === 2}>{icon}</AppTile>{run && <Running $alert={run === 2} />}</AppButton>
        ))}
        <Tray>
          <TrayIcon $after={23}><Line w={14} h={9} d="M1 8l6-6.500L13 8" c="#1b1b18" sw={1.7} /></TrayIcon>
          <TrayIcon $after={10}><Wifi /></TrayIcon>
          <TrayIcon $after={10}><Sound /></TrayIcon>
          <TrayIcon $after={21}><Battery /></TrayIcon>
          <TrayIcon $after={11}><Stack $right><span>8:37 AM</span><span>2/22/2024</span></Stack></TrayIcon>
          <Bell />
        </Tray>
      </Taskbar>
    </Desktop>
  );
}
